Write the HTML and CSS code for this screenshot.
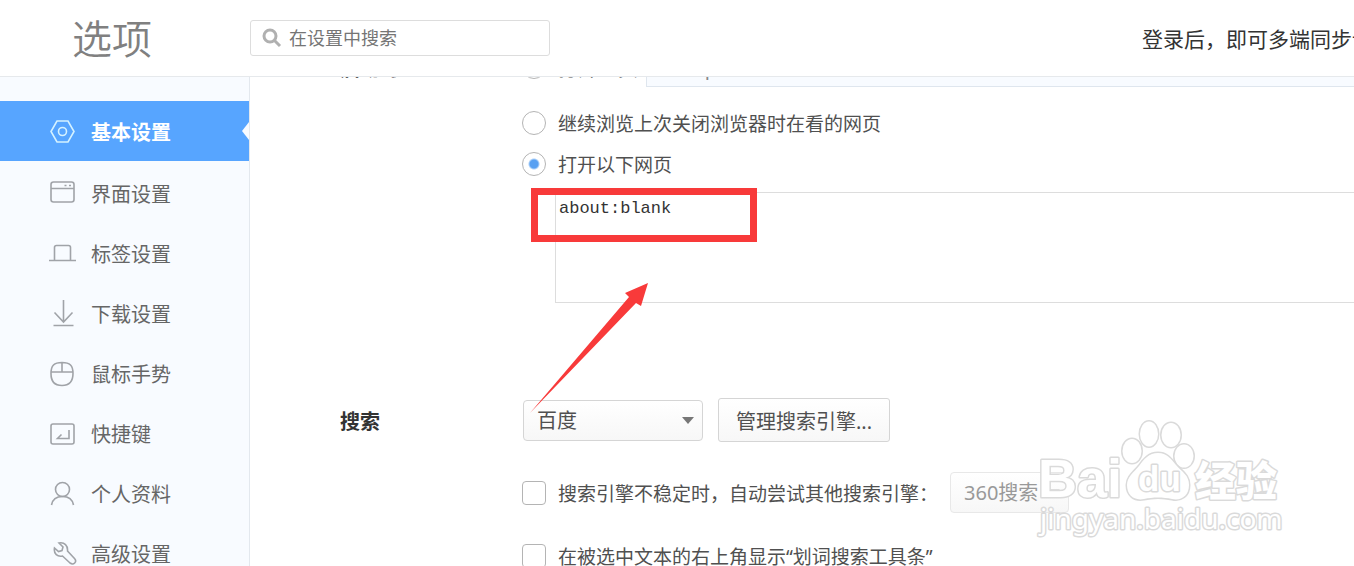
FILE: index.html
```html
<!DOCTYPE html>
<html lang="zh-CN">
<head>
    <meta charset="UTF-8">
    <meta name="viewport" content="width=device-width, initial-scale=1.0">
    <title>选项</title>
    <link rel="stylesheet" href="styles.css">
</head>
<body>
    <header class="header">
        <h1 class="title">选项</h1>
        <div class="search">
            <svg class="search-icon" viewBox="0 0 20 20"><circle cx="8" cy="8" r="6"/><path d="M12.5 12.5L18 18"/></svg>
            <input type="text" class="search-input" aria-label="在设置中搜索" placeholder="在设置中搜索">
        </div>
        <div class="login">登录后，即可多端同步设置</div>
    </header>

    <div class="container">
        <nav class="sidebar">
            <a href="#basic" class="nav-item active">
                <svg class="icon" viewBox="0 0 28 28"><path d="M8 4h11l6 10.500-6 10.500H8L2 14.500z"/><circle cx="13.500" cy="14.500" r="4"/></svg>
                <span>基本设置</span>
            </a>
            <a href="#ui" class="nav-item">
                <svg class="icon" viewBox="0 0 28 28"><rect x="2" y="3" width="23" height="20" rx="2.500"/><path d="M2 9.500h23M15.500 6.500h2M20 6.500h2"/></svg>
                <span>界面设置</span>
            </a>
            <a href="#tab" class="nav-item">
                <svg class="icon" viewBox="0 0 28 28"><path d="M0 21.500h27M5.500 21.500v-13a2 2 0 0 1 2-2h12a2 2 0 0 1 2 2v13"/></svg>
                <span>标签设置</span>
            </a>
            <a href="#download" class="nav-item">
                <svg class="icon" viewBox="0 0 28 28"><path d="M14.500 1v22M5.500 13.500l9 9.500 9-9.500M4.500 26.500h20"/></svg>
                <span>下载设置</span>
            </a>
            <a href="#mouse" class="nav-item">
                <svg class="icon" viewBox="0 0 28 28"><path d="M13 3.500c8 0 11 3 11 11s-3 12-11 12-11-4-11-12 3-11 11-11zM2 13h22M13 3.500V13"/></svg>
                <span>鼠标手势</span>
            </a>
            <a href="#key" class="nav-item">
                <svg class="icon" viewBox="0 0 28 28"><rect x="2" y="5" width="23" height="20" rx="2"/><path d="M20 11v8.500H8.500l4-4"/></svg>
                <span>快捷键</span>
            </a>
            <a href="#profile" class="nav-item">
                <svg class="icon" viewBox="0 0 28 28"><circle cx="13.500" cy="10.500" r="7"/><path d="M2.500 26c1-5.500 5-8.500 11-8.500s10 3 11 8.500"/></svg>
                <span>个人资料</span>
            </a>
            <a href="#advanced" class="nav-item">
                <svg class="icon" viewBox="0 0 28 28"><path d="M10 4l4 4-1 3.500-3.500 1L5.500 9c-1 6 3 9 8 8l7.500 7c3.500 2.500 7.500-1 4.500-4.500L18.500 12C19 6.500 15.500 3 10 4z"/></svg>
                <span>高级设置</span>
            </a>
        </nav>

        <main class="main">
            <section class="group startup">
                <h2 class="group-title">启动时</h2>
                <div class="group-body">
                    <div class="row home">
                        <input type="radio" name="startup" id="start-home" class="check round">
                        <label for="start-home">打开主页</label>
                        <input type="text" class="home-url" aria-label="主页地址" value="http://hao.360.com" disabled>
                    </div>
                    <div class="row">
                        <input type="radio" name="startup" id="start-last" class="check round">
                        <label for="start-last">继续浏览上次关闭浏览器时在看的网页</label>
                    </div>
                    <div class="row">
                        <input type="radio" name="startup" id="start-pages" class="check round" checked>
                        <label for="start-pages">打开以下网页</label>
                    </div>
                    <textarea class="pages" aria-label="打开以下网页" spellcheck="false">about:blank</textarea>
                </div>
            </section>

            <section class="group engine">
                <h2 class="group-title">搜索</h2>
                <div class="group-body">
                    <div class="row buttons">
                        <div class="select">
                            <select aria-label="搜索引擎"><option>百度</option></select>
                        </div>
                        <button type="button" class="btn">管理搜索引擎...</button>
                    </div>
                    <div class="row fallback">
                        <input type="checkbox" id="fallback" class="check">
                        <label for="fallback">搜索引擎不稳定时，自动尝试其他搜索引擎：</label>
                        <div class="select small">
                            <select aria-label="其他搜索引擎" disabled><option>360搜索</option></select>
                        </div>
                    </div>
                    <div class="row toolbar">
                        <input type="checkbox" id="toolbar" class="check">
                        <label for="toolbar">在被选中文本的右上角显示“划词搜索工具条”</label>
                    </div>
                </div>
            </section>
        </main>
    </div>

    <!-- 标注 -->
    <div class="mark-box"></div>
    <svg class="mark-arrow" viewBox="0 0 118 130"><path d="M0 130L99 14l-4-4L118 0l-7 23-5-3z"/></svg>

    <!-- 水印 -->
    <svg class="watermark" viewBox="0 0 250 124">
        <text class="wm-brand" x="2" y="81">Bai</text>
        <g class="wm-shape">
            <ellipse cx="96" cy="35" rx="9.500" ry="12"/>
            <ellipse cx="113" cy="18" rx="9" ry="12.500"/>
            <ellipse cx="135" cy="19" rx="9.500" ry="12"/>
            <ellipse cx="148" cy="40" rx="9.500" ry="11.500"/>
            <path d="M122 37c9 0 13 6 18 12 6 7 13 10 13 20 0 11-8 16-17 14-9-2-19-2-28 0-10 2-17-4-17-14 0-8 7-13 12-19 5-7 10-13 19-13z"/>
        </g>
        <text class="wm-du" x="102" y="75">du</text>
        <text class="wm-cn" x="159" y="80">经验</text>
        <text class="wm-url" x="4" y="113">jingyan.baidu.com</text>
    </svg>
</body>
</html>
```
FILE: styles.css
```css
* {
    box-sizing: border-box;
}
body {
    display: flex;
    flex-direction: column;
    position: relative;
    height: 100vh;
    margin: 0;
    overflow: hidden;
    font-family: "Noto Sans", "Noto Sans CJK SC", sans-serif;
    font-size: 19px;
    color: #505050;
    background-color: #fff;
}
input, select, textarea, button {
    margin: 0;
    font-family: inherit;
    font-size: 20px;
    color: inherit;
}

/* 顶部 */
.header {
    display: flex;
    align-items: center;
    flex-shrink: 0;
    height: 77px;
    border-bottom: 1px solid #e6e9ec;
}
.title {
    width: 250px;
    margin: 0;
    padding: 2px 0 0 72px;
    font-size: 40px;
    font-weight: 350;
    line-height: 60px;
    color: #808080;
}
.search {
    display: flex;
    align-items: center;
    width: 300px;
    height: 36px;
    padding-left: 11px;
    border: 1px solid #ddd;
    border-radius: 3px;
}
.search-icon {
    width: 20px;
    height: 20px;
    fill: none;
    stroke: #b0b0b0;
    stroke-width: 3;
}
.search-input {
    flex: 1;
    min-width: 0;
    padding: 0 7px;
    border: 0;
    outline: 0;
    background: none;
    font-size: 18px;
}
.search-input::placeholder {
    color: #757575;
}
.login {
    width: 212px;
    margin-left: auto;
    overflow: hidden;
    white-space: nowrap;
    font-size: 21px;
    color: #333;
}

.container {
    display: flex;
    flex: 1;
    min-height: 0;
}

/* 左侧导航 */
.sidebar {
    display: flex;
    flex-direction: column;
    flex-shrink: 0;
    width: 250px;
    padding-top: 24px;
    overflow: hidden;
    background-color: #f8fbff;
    border-right: 1px solid #e3e8ee;
}
.nav-item {
    display: flex;
    align-items: center;
    flex-shrink: 0;
    gap: 14px;
    height: 60px;
    padding-left: 49px;
    font-size: 20px;
    color: #666;
    text-decoration: none;
}
.nav-item.active {
    position: relative;
    margin-bottom: 2px;
    color: #fff;
    font-weight: bold;
    background-color: #57a5ff;
}
.nav-item.active::after {
    content: "";
    position: absolute;
    right: 0;
    top: 21px;
    border: 9px solid transparent;
    border-left-width: 0;
    border-right: 7px solid #f8fbff;
}
.icon {
    width: 28px;
    height: 28px;
    fill: none;
    stroke: #a0a3a8;
    stroke-width: 1.6;
}
.active .icon {
    stroke: #d5f2ff;
}

/* 设置内容 */
.main {
    flex: 1;
    min-width: 0;
    padding-left: 90px;
    overflow: hidden;
}
.group {
    display: grid;
    grid-template-columns: 182px 1fr;
}
.startup {
    margin-top: -30px;
}
.engine {
    margin-top: 95px;
}
.group-title {
    margin: 0;
    font-size: 20px;
    line-height: 48px;
    color: #333;
}
.startup .group-title {
    line-height: 44px;
}
.row {
    display: flex;
    align-items: center;
    gap: 12px;
    height: 41px;
    white-space: nowrap;
}
.row.home {
    height: 40px;
    margin-bottom: 15px;
}
.home label {
    font-size: 20px;
}
.home-url {
    flex: 1;
    height: 40px;
    margin-left: -4px;
    padding: 0 31px;
    border: 1px solid #dfe6ee;
    border-right: 0;
    background-color: #f8fbff;
    color: #888;
}
.check {
    appearance: none;
    flex-shrink: 0;
    width: 24px;
    height: 24px;
    border: 1px solid #b4b4b4;
    border-radius: 4px;
    background-color: #fff;
}
.check.round {
    border-radius: 50%;
}
.check.round:checked {
    background-image: radial-gradient(circle, #57a0f2 4px, transparent 6px);
}
.pages {
    display: block;
    width: calc(100% - 33px);
    height: 111px;
    margin: 8px 0 0 33px;
    padding: 6px 3px;
    border: 1px solid #ddd;
    border-right: 0;
    outline: 0;
    resize: none;
    font-family: "Liberation Mono", monospace;
    font-size: 17px;
    color: #333;
}
.row.buttons {
    gap: 15px;
    height: 44px;
    padding-left: 1px;
}
.select {
    position: relative;
    width: 180px;
}
.select::after {
    content: "";
    position: absolute;
    top: 17px;
    right: 9px;
    border: 6px solid transparent;
    border-top: 7px solid #777;
    border-bottom-width: 0;
    pointer-events: none;
}
.select select {
    appearance: none;
    display: block;
    width: 100%;
    height: 41px;
    padding: 0 13px;
    border: 1px solid #d5d5d5;
    border-radius: 4px;
    background: linear-gradient(#fff, #f7f7f7);
}
.select.small {
    width: 119px;
}
.select.small::after {
    border-top-color: #ddd;
}
.select select:disabled {
    border-color: #e8e8e8;
    color: #999;
    opacity: 1;
}
.btn {
    width: 172px;
    height: 44px;
    padding: 0;
    border: 1px solid #d5d5d5;
    border-radius: 3px;
    background: linear-gradient(#fff, #f7f7f7);
}
.row.fallback {
    margin-top: 30px;
}
.row.toolbar {
    margin-top: 22px;
}

/* 标注和水印 */
.mark-box {
    position: absolute;
    left: 531px;
    top: 188px;
    width: 226px;
    height: 54px;
    border: 7px solid #f83a3a;
}
.mark-arrow {
    position: absolute;
    left: 530px;
    top: 283px;
    width: 118px;
    height: 130px;
    fill: #f83a3a;
}
.watermark {
    position: absolute;
    right: 68px;
    bottom: 26px;
    width: 250px;
    height: 124px;
    fill: #fff;
    stroke: #dadada;
    stroke-width: 3;
    stroke-linejoin: round;
    paint-order: stroke;
}
.wm-brand {
    font: bold 54px "Liberation Sans", sans-serif;
}
.wm-du {
    font: bold 35px "Liberation Sans", sans-serif;
}
.wm-cn {
    font: 900 41px "Noto Sans CJK SC", sans-serif;
}
.wm-url {
    font: 28px "Noto Sans", sans-serif;
}
```
